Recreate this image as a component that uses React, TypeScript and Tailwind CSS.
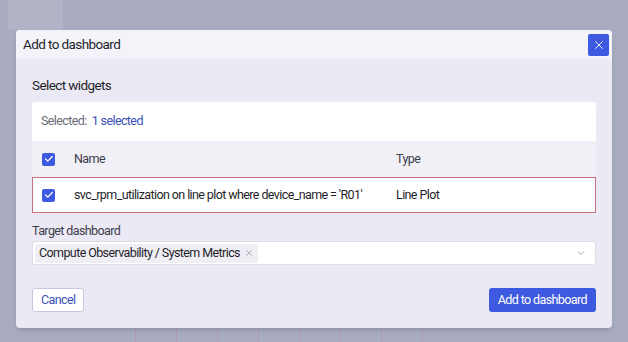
// Add-to-dashboard modal over a dimmed dashboard page.
import { Check, ChevronDown, X } from "lucide-react";

const font = { fontFamily: '"Liberation Sans Narrow", "Roboto", "Liberation Sans", sans-serif' };

function Box() {
  return (
    <span className="flex h-[13px] w-[13px] shrink-0 items-center justify-center rounded-[2px] bg-[#3e5ae0]">
      <Check className="h-[10px] w-[10px] text-white" strokeWidth={3} />
    </span>
  );
}

export default function App() {
  return (
    <div className="relative h-[342px] w-[628px] overflow-hidden bg-[#a9acc0] tracking-[-0.6px]" style={font}>
      {/* dimmed page behind */}
      <div className="flex h-full gap-2 px-2">
        <div className="h-[30px] w-[55px] rounded-b bg-[#b1b4c7]" />
        <div className="flex flex-1 items-end gap-10 pl-16">
          {[0, 1, 2, 3, 4, 5, 6, 7].map((i) => (
            <div key={i} className="h-[16px] w-px bg-[#b59ab8]" />
          ))}
        </div>
      </div>

      {/* modal */}
      <div className="absolute left-[16px] top-[30px] flex h-[298px] w-[596px] flex-col overflow-hidden rounded-[4px] bg-[#ebe9f4] shadow-md">
        <div className="flex h-[29px] items-center justify-between bg-[#f4f3f9] pl-[7px] pr-[3px]">
          <span className="text-[13.5px] text-[#1f1f2a]">Add to dashboard</span>
          <button className="flex h-[22px] w-[21px] items-center justify-center rounded-[2px] bg-[#3e5ae0]">
            <X className="h-[14px] w-[14px] text-white" strokeWidth={1.5} />
          </button>
        </div>

        <div className="flex flex-1 flex-col px-[16px] pt-[16px]">
          <div className="mb-[7px] text-[13.5px] leading-[20px] text-[#1f1f2a]">Select widgets</div>

          <div className="overflow-hidden rounded-t-[3px] text-[12.5px]">
            <div className="flex h-[39px] items-center gap-[5px] bg-white px-[9px]">
              <span className="text-[#6b6b78]">Selected:</span>
              <span className="text-[#3a4fb8]">1 selected</span>
            </div>
            <div className="flex h-[36px] items-center bg-[#f1f0f7] pl-[10px] text-[#3d3d4a]">
              <Box />
              <span className="ml-[19px] w-[322px]">Name</span>
              <span>Type</span>
            </div>
            <div className="flex h-[36px] items-center whitespace-nowrap border border-[#c8707d] bg-white pl-[9px] text-[#1f1f2a]">
              <Box />
              <span className="ml-[19px] w-[322px]">svc_rpm_utilization on line plot where device_name = 'R01'</span>
              <span>Line Plot</span>
            </div>
          </div>

          <div className="mt-[10px] text-[12.5px] leading-[16px] text-[#3d3d4a]">Target dashboard</div>
          <div className="mt-[2px] flex h-[24px] items-center justify-between rounded-[3px] border border-[#dcdbe6] bg-white pl-[2px] pr-[8px]">
            <span className="flex h-[19px] items-center gap-[4px] rounded-[2px] bg-[#efeef4] px-[4px] text-[12.5px] text-[#1f1f2a]">
              Compute Observability / System Metrics
              <X className="h-[10px] w-[10px] text-[#8a8a96]" strokeWidth={1.5} />
            </span>
            <ChevronDown className="h-[12px] w-[12px] text-[#8a8a96]" strokeWidth={1.5} />
          </div>

          <div className="mt-[23px] flex items-center justify-between text-[12.5px]">
            <button className="h-[24px] rounded-[3px] border border-[#c9c8e0] bg-white px-[8px] text-[#3a4fb8]">
              Cancel
            </button>
            <button className="h-[24px] rounded-[3px] bg-[#3e5ae0] px-[9px] text-white">
              Add to dashboard
            </button>
          </div>
        </div>
      </div>
    </div>
  );
}
